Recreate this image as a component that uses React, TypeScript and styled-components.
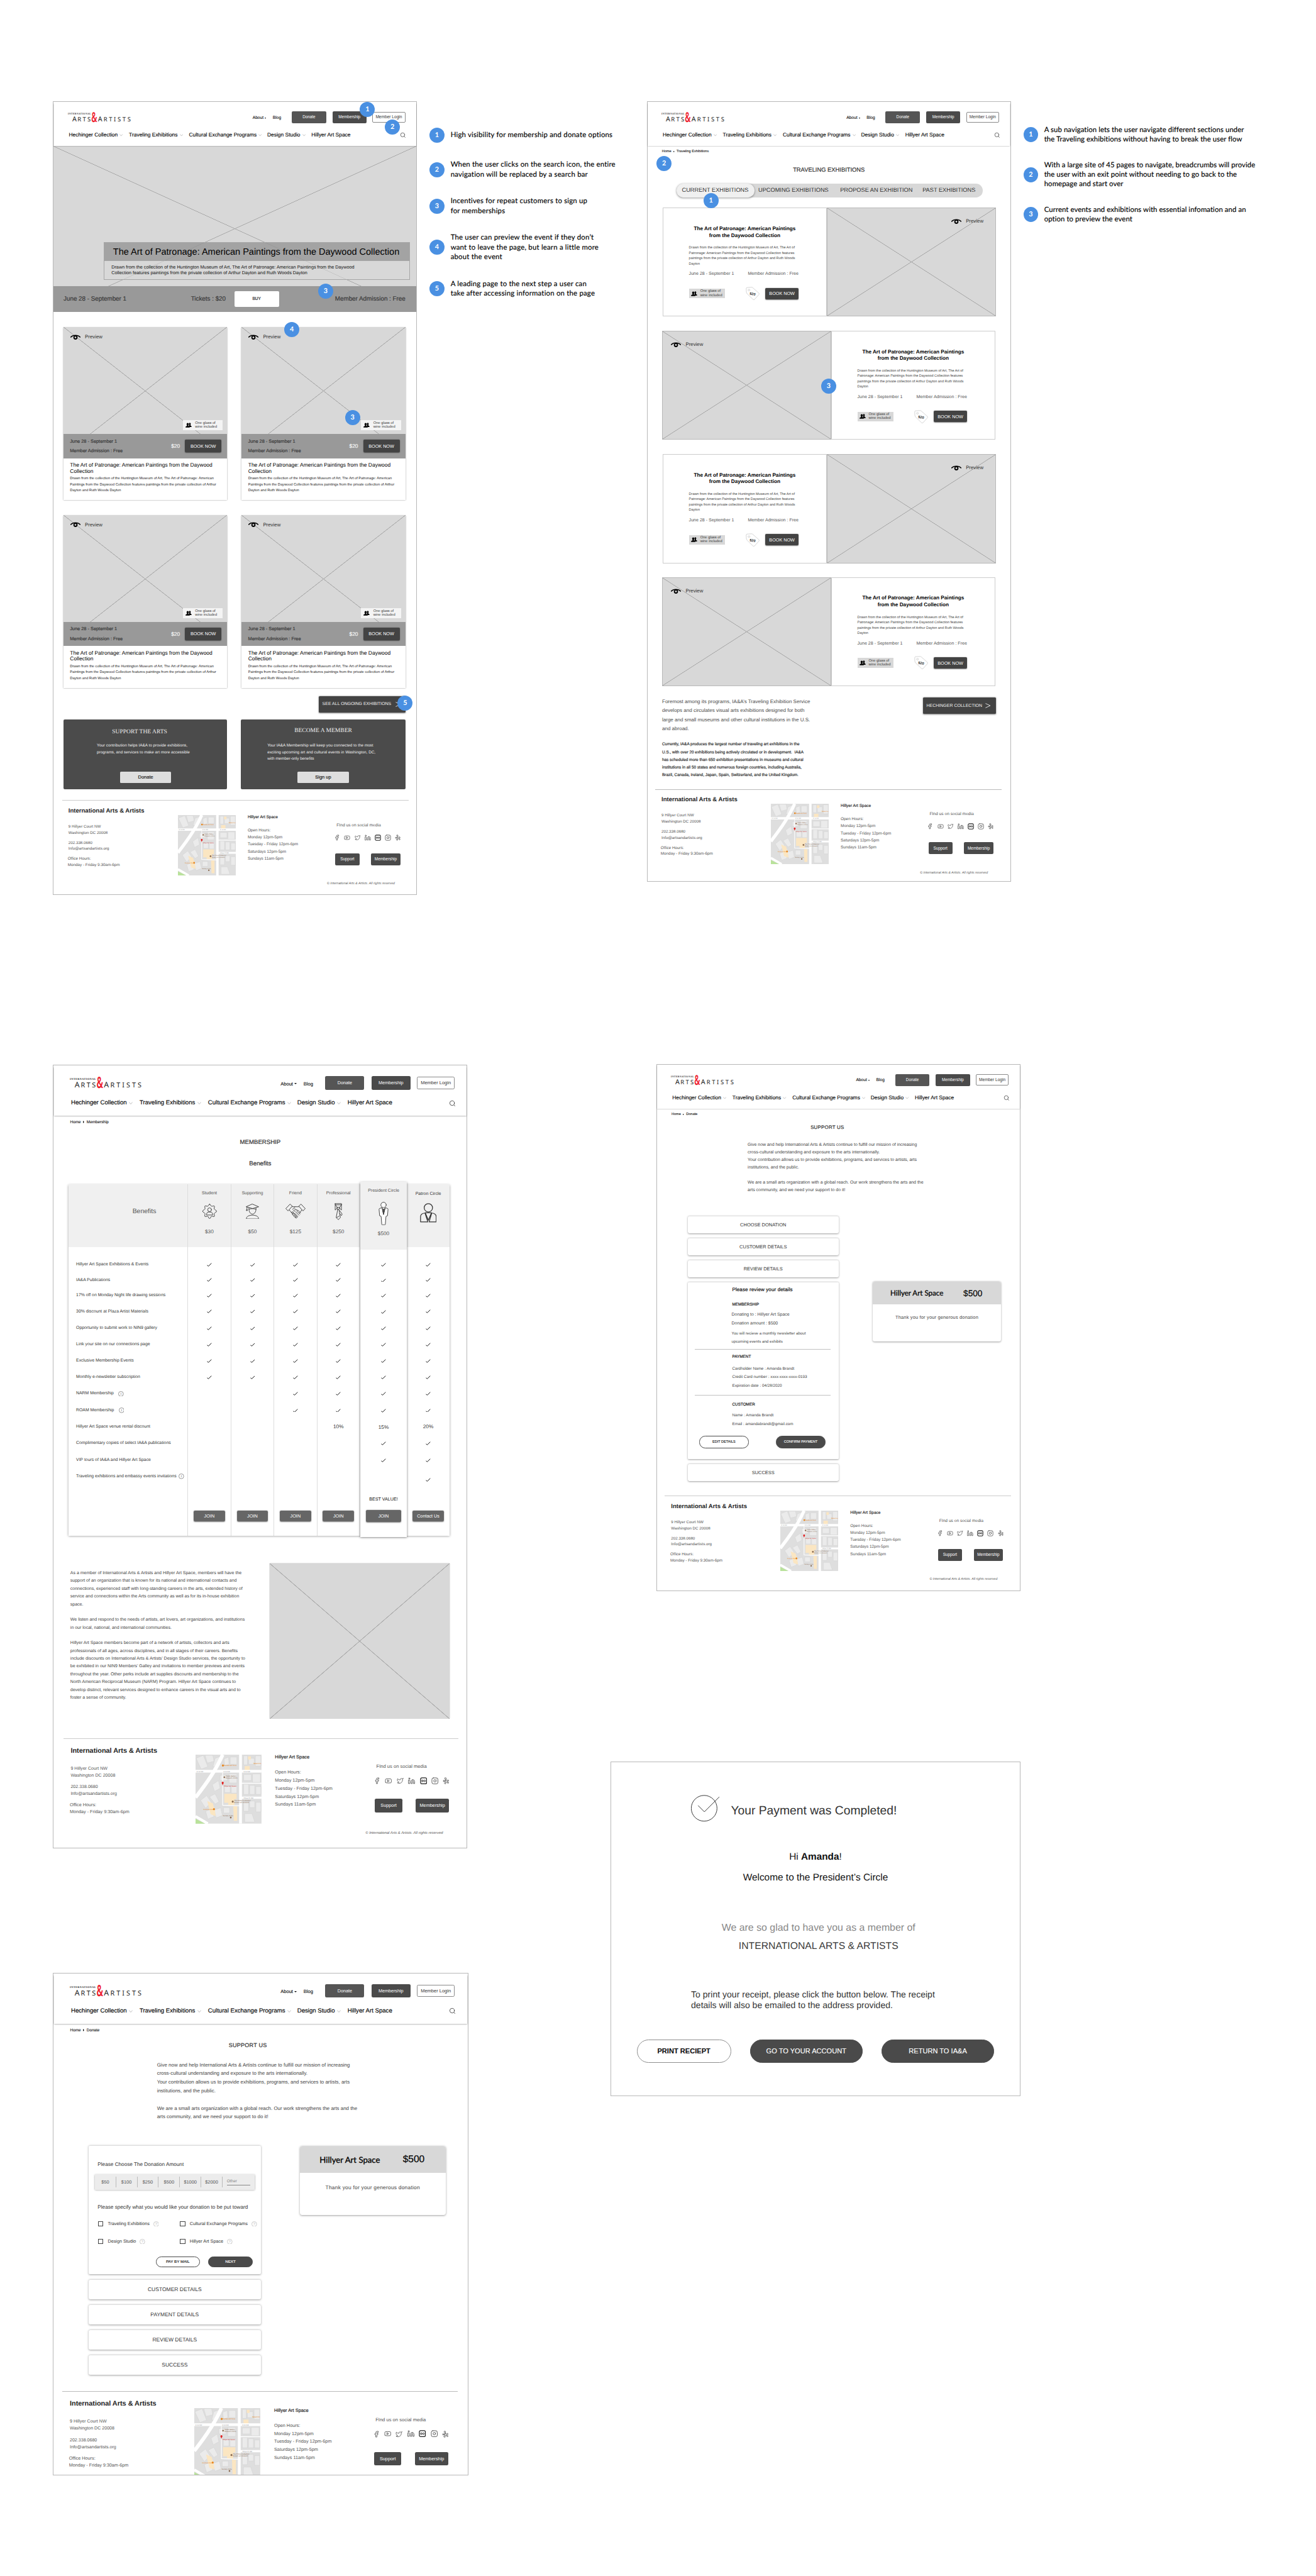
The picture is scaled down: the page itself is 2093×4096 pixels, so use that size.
import React from "react";
import styled, { createGlobalStyle, css } from "styled-components";
import { Facebook, Youtube, Twitter, Linkedin, Instagram, Search } from "lucide-react";

const GlobalStyle = createGlobalStyle`
  html, body { margin: 0; padding: 0; background: #fff; }
  * { box-sizing: border-box; }
  body {
    font-family: "Liberation Sans", Arial, sans-serif;
    text-rendering: geometricPrecision;
    color: #222;
  }
  svg { display: block; flex: none; }
`;

/* ---------- canvas ---------- */

const Canvas = styled.main`
  zoom: 0.80345;
  width: 2605px;
  height: 5098px;
  display: flex;
  overflow: hidden;
  background: #fff;
`;

const Lane = styled.div<{ $w: number; $pl: number }>`
  width: ${(p) => p.$w}px;
  padding: 201px 0 0 ${(p) => p.$pl}px;
  display: flex;
  flex-direction: column;
  align-items: flex-start;
  flex: none;
`;

const Annotated = styled.div<{ $ml?: number }>`
  margin-left: ${(p) => p.$ml ?? 0}px;
  display: flex;
  align-items: flex-start;
`;

const Board = styled.section<{ $w: number; $h: number; $mt?: number; $ml?: number; $scale?: number }>`
  position: relative;
  zoom: ${(p) => p.$scale ?? 1};
  width: ${(p) => p.$w}px;
  height: ${(p) => p.$h}px;
  margin-top: ${(p) => p.$mt ?? 0}px;
  margin-left: ${(p) => p.$ml ?? 0}px;
  outline: 1.6px solid #b8b8b8;
  outline-offset: -1.6px;
  overflow: hidden;
  flex: none;
  background: #fff;
`;

const BoardWrap = styled.div`
  position: relative;
  flex: none;
`;

/* ---------- text ---------- */

type CopyProps = {
  $size: number;
  $line: number;
  $color?: string;
  $medium?: boolean;
  $bold?: boolean;
  $ls?: number;
  $mt?: number;
  $ml?: number;
  $center?: boolean;
  $italic?: boolean;
};

const Copy = styled.div<CopyProps>`
  font-size: ${(p) => p.$size}px;
  line-height: ${(p) => p.$line}px;
  color: ${(p) => p.$color ?? "#333"};
  font-weight: ${(p) => (p.$bold ? 700 : 400)};
  font-style: ${(p) => (p.$italic ? "italic" : "normal")};
  letter-spacing: ${(p) => p.$ls ?? 0}px;
  margin-top: ${(p) => p.$mt ?? 0}px;
  margin-left: ${(p) => p.$ml ?? 0}px;
  text-align: ${(p) => (p.$center ? "center" : "left")};
  white-space: pre;
  ${(p) => p.$medium && css`-webkit-text-stroke: 0.25px currentColor;`}
`;

/* ---------- annotation notes ---------- */

const Dot = styled.span<{ $w?: number }>`
  width: ${(p) => p.$w ?? 30}px;
  height: 30px;
  border-radius: 50%;
  background: #4a90e2;
  color: #fff;
  font: 700 13.5px/31px Lato, sans-serif;
  text-align: center;
  flex: none;
`;

const Pin = styled(Dot)<{ $x: number; $y: number }>`
  position: absolute;
  left: ${(p) => p.$x - 15}px;
  top: ${(p) => p.$y - 15}px;
  z-index: 2;
`;

const Notes = styled.ol<{ $ml: number; $mt: number; $gap: number }>`
  list-style: none;
  margin: ${(p) => p.$mt}px 0 0 ${(p) => p.$ml}px;
  padding: 0;
  display: flex;
  flex-direction: column;
  gap: ${(p) => p.$gap}px;
`;

const Note = styled.li`
  display: flex;
  align-items: center;
  gap: 12px;
`;

const NoteText = styled.p<{ $ls: number }>`
  margin: 0;
  font: 400 14.2px/19px Lato, sans-serif;
  letter-spacing: ${(p) => p.$ls}px;
  color: #000;
  white-space: pre;
  -webkit-text-stroke: 0.2px #000;
`;

type NoteListProps = { items: string[]; ml: number; mt: number; gap: number; ls: number; dot?: number };

const NoteList = ({ items, ml, mt, gap, ls, dot }: NoteListProps) => (
  <Notes $ml={ml} $mt={mt} $gap={gap}>
    {items.map((t, i) => (
      <Note key={i}>
        <Dot $w={dot}>{i + 1}</Dot>
        <NoteText $ls={ls}>{t}</NoteText>
      </Note>
    ))}
  </Notes>
);

/* ---------- site header ---------- */

const HeaderBar = styled.header`
  margin: 1.6px 1.6px 0;
  height: 86.4px;
  padding-top: 17.8px;
  background: #fff;
  box-shadow: 0 2px 2.5px -0.5px rgba(0, 0, 0, 0.42);
  position: relative;
  z-index: 1;
`;

const TopRow = styled.div`
  height: 23.6px;
  padding-left: 27.4px;
  display: grid;
  grid-template-columns: 366px 40px 37.6px 80.4px 79px 66px;
  align-items: center;
`;

const TopLink = styled.a`
  display: flex;
  align-items: center;
  gap: 2.5px;
  padding-top: 3px;
  font-size: 8.3px;
  line-height: 10px;
  color: #111;
  -webkit-text-stroke: 0.15px #111;
`;

const Caret = styled.i<{ $dir?: "right" }>`
  border: 2.2px solid transparent;
  ${(p) =>
    p.$dir === "right"
      ? css`border-left: 3px solid #111; border-right: 0;`
      : css`border-top: 3px solid #111; border-bottom: 0;`}
`;

const SolidButton = styled.button<{ $w: number; $h?: number; $size?: number; $bg?: string; $shadow?: boolean }>`
  width: ${(p) => p.$w}px;
  height: ${(p) => p.$h ?? 23.6}px;
  padding: 0;
  border: 0;
  border-radius: 2.5px;
  background: ${(p) => p.$bg ?? "#4a4a4a"};
  color: #fff;
  font: 400 ${(p) => p.$size ?? 7.9}px/1 "Liberation Sans", Arial, sans-serif;
  white-space: nowrap;
  flex: none;
  ${(p) => p.$shadow && css`box-shadow: 0 1px 2px rgba(0, 0, 0, 0.5);`}
`;

const OutlineButton = styled(SolidButton)`
  background: #fff;
  color: #333;
  border: 1.3px solid #8a8a8a;
`;

const NavRow = styled.nav`
  margin-top: 15.4px;
  height: 16px;
  padding-left: 29.7px;
  display: grid;
  grid-template-columns: 119px 118.7px 155px 87.4px 175.6px 12px;
  align-items: center;
`;

const NavLink = styled.a`
  display: flex;
  align-items: center;
  gap: 4px;
  font-size: 10.5px;
  line-height: 16px;
  color: #000;
  white-space: nowrap;
  -webkit-text-stroke: 0.15px #000;
`;

const Chevron = () => (
  <svg width="6.5" height="4.5" viewBox="0 0 6.5 4.5" fill="none" stroke="#999" strokeWidth="0.7">
    <path d="M0.4 0.6 3.25 3.9 6.1 0.6" />
  </svg>
);

const LogoMark = styled.svg`
  overflow: visible;
`;

const Logo = () => (
  <LogoMark width="125" height="21" viewBox="0 0 125 21" fill="#1c1c1c" fontFamily="'Noto Sans', sans-serif">
    <text x="0" y="5" fontSize="4.6" fontFamily="'Liberation Serif', serif" fontWeight="700" textLength="45.5">
      INTERNATIONAL
    </text>
    <text x="8.6" y="19" fontSize="13.4">
      A
    </text>
    <text x="19" y="19" fontSize="11.8" textLength="26">
      RTS
    </text>
    <text
      x="46.3"
      y="19.4"
      fontSize="27"
      fontWeight="600"
      fill="#ee1c2e"
      textLength="11.5"
      lengthAdjust="spacingAndGlyphs"
    >
      &amp;
    </text>
    <text x="59.3" y="19" fontSize="13.4">
      A
    </text>
    <text x="70.5" y="19" fontSize="11.8" textLength="54">
      RTISTS
    </text>
  </LogoMark>
);

const Header = () => (
  <HeaderBar>
    <TopRow>
      <Logo />
      <TopLink>
        About <Caret />
      </TopLink>
      <TopLink>Blog</TopLink>
      <SolidButton $w={68} $bg="#555">
        Donate
      </SolidButton>
      <SolidButton $w={67.5}>Membership</SolidButton>
      <OutlineButton $w={65.5} $h={21.5} $size={8.2}>
        Member Login
      </OutlineButton>
    </TopRow>
    <NavRow>
      {["Hechinger Collection", "Traveling Exhibitions", "Cultural Exchange Programs", "Design Studio"].map((t) => (
        <NavLink key={t}>
          {t} <Chevron />
        </NavLink>
      ))}
      <NavLink>Hillyer Art Space</NavLink>
      <Search size={12} color="#222" strokeWidth={1.6} />
    </NavRow>
  </HeaderBar>
);

const Crumbs = styled.div`
  margin: 6.5px 0 0 29.7px;
  height: 10px;
  display: flex;
  align-items: center;
  gap: 4px;
  font-size: 6.95px;
  line-height: 10px;
  color: #111;
  -webkit-text-stroke: 0.12px #111;
`;

const Breadcrumb = ({ here }: { here: string }) => (
  <Crumbs>
    Home <Caret $dir="right" /> {here}
  </Crumbs>
);

/* ---------- placeholders & small icons ---------- */

const crossed = css`
  background-color: #d8d8d8;
  background-image: linear-gradient(
      to top right,
      transparent calc(50% - 0.8px),
      #a8a8a8 calc(50% - 0.3px),
      #a8a8a8 calc(50% + 0.3px),
      transparent calc(50% + 0.8px)
    ),
    linear-gradient(
      to bottom right,
      transparent calc(50% - 0.8px),
      #a8a8a8 calc(50% - 0.3px),
      #a8a8a8 calc(50% + 0.3px),
      transparent calc(50% + 0.8px)
    );
  background-repeat: no-repeat;
`;

const EyeIcon = () => (
  <svg width="20" height="10" viewBox="0 0 20 10" fill="none" stroke="#000">
    <path d="M0.3 5.6C4.5 0.2 15.5 0.2 19.7 5.6" strokeWidth="1.9" />
    <circle cx="10" cy="5.7" r="3" strokeWidth="2.3" />
  </svg>
);

const PeopleIcon = () => (
  <svg width="12" height="10" viewBox="0 0 12 10" fill="#000">
    <ellipse cx="8.6" cy="2.6" rx="1.8" ry="2.3" />
    <path d="M7.4 4.2h2.4l.2 1.8 1.9.9V8.6H6.6z" />
    <ellipse cx="4.3" cy="3.2" rx="2.1" ry="2.5" />
    <path d="M.2 9.7V8.2c0-1 2-1.2 2.800-1.800V4.800h2.600v1.600C6.400 7 8.400 7.200 8.400 8.200v1.500z" />
  </svg>
);

const InfoIcon = ({ glyph, color }: { glyph: string; color: string }) => (
  <svg width="9.5" height="9.5" viewBox="0 0 19 19" fill="none" stroke={color} strokeWidth="1.3">
    <circle cx="9.5" cy="9.5" r="8.5" />
    <text x="9.5" y="13.7" fontSize="12" textAnchor="middle" fill={color} stroke="none">
      {glyph}
    </text>
  </svg>
);

const PreviewTag = styled.div<{ $top: number; $left: number }>`
  padding: ${(p) => p.$top}px 0 0 ${(p) => p.$left}px;
  display: flex;
  align-items: center;
  gap: 9px;
  font-size: 9.8px;
  line-height: 12px;
  color: #333;
`;

const Preview = ({ top, left }: { top: number; left: number }) => (
  <PreviewTag $top={top} $left={left}>
    <EyeIcon />
    Preview
  </PreviewTag>
);

const WineBadge = styled.div<{ $w: number; $h: number; $bg: string; $pl: number; $gap: number }>`
  width: ${(p) => p.$w}px;
  height: ${(p) => p.$h}px;
  padding-left: ${(p) => p.$pl}px;
  display: flex;
  align-items: center;
  gap: ${(p) => p.$gap}px;
  background: ${(p) => p.$bg};
  font-size: 7.2px;
  line-height: 7.7px;
  color: #333;
  white-space: pre;
  flex: none;
`;

/* ---------- footer ---------- */

const FooterBar = styled.footer<{ $ml: number; $rule: string }>`
  width: 685.7px;
  margin-left: ${(p) => p.$ml}px;
  height: 187px;
  padding-left: 12.6px;
  border-top: 1.3px solid ${(p) => p.$rule};
  display: grid;
  grid-template-columns: 216.7px 138.1px 155.7px 170px;
  align-items: start;
`;

const SocialRow = styled.div`
  margin: 10.6px 0 0 15.3px;
  height: 14px;
  display: grid;
  grid-template-columns: repeat(7, 20.1px);
  align-items: center;
`;

const FooterActions = styled.div`
  margin: 24.3px 0 0 17.9px;
  display: flex;
  gap: 23.2px;
`;

const MapFrame = styled.div`
  margin-top: 28px;
`;

const MapPicture = () => (
  <MapFrame>
    <svg width="114.5" height="119.7" viewBox="0 0 236 229" preserveAspectRatio="none" fontFamily="'Liberation Sans', sans-serif">
      <rect width="236" height="229" fill="#dedede" />
      <g fill="#ebebeb" stroke="#cfcfcf" strokeWidth="1">
        <path d="M2 12 28 2 44 40 20 48zM34 2h28l4 20-24 6zM70 12 88 6 78 38 62 40z" />
        <path d="M102 14 118 8 120 32 104 36zM124 8h24v24h-24z" />
        <path d="M172 4h14v30h-14zM190 12h20v20h-20zM214 4h20v34h-20z" />
        <path d="M88 68h26v18H88zM120 64h28v30h-28zM60 100l22-14 6 26-20 10zM104 104h20v22h-20zM128 102h20v26h-20z" />
        <path d="M172 66h28v20h-28zM204 64h28v28h-28zM172 98h18v34h-18zM194 102h18v30h-18zM216 106h18v26h-18z" />
        <path d="M18 152l22-16 16 22-20 20zM50 140l20-10 14 26-14 8zM66 184l24-8 6 26-22 8zM36 188l22-8 8 26-22 8z" />
        <path d="M172 156h18v32h-18zM194 154h18v22h-18zM216 158h18v32h-18zM176 196h26l10 28h-36zM100 176h22v18h-22z" />
      </g>
      <path
        d="M103 130h44v18h-8v20h-22v-8h-14zM135 172h14v48h-12zM42 154l20 8 8 26 2 16-18-6zM176 38h18v14h-18zM188 6h10v10h-10z"
        fill="#fbe6c2"
      />
      <g stroke="#fff" fill="none">
        <path d="M97 0Q70 60 0 142" strokeWidth="13" />
        <path d="M161 0V229" strokeWidth="10" />
        <path d="M0 55H236" strokeWidth="9" />
        <path d="M161 95H236" strokeWidth="3" />
        <path d="M161 143H236" strokeWidth="7" />
        <path d="M97 60V168L160 170" strokeWidth="2.5" />
        <path d="M0 205 44 229" strokeWidth="9" />
      </g>
      <path d="M0 213 34 229H0z" fill="#b9e29b" />
      <g fontSize="6">
        <g fill="#e8871e">
          <circle cx="98" cy="36" r="3.5" />
          <text x="102" y="38.5">Restaurant Nora</text>
          <circle cx="66" cy="181" r="3.5" />
          <text x="28" y="183">Cosmos Club</text>
          <text x="207" y="31">Tabard Inn</text>
        </g>
        <g fill="#8d6e54">
          <circle cx="103" cy="75" r="3" />
          <text x="108" y="73">Studio Gallery</text>
          <text x="108" y="80">Museum of Arts</text>
          <circle cx="133" cy="156" r="3.5" />
          <text x="138" y="154">The Phillips Collection</text>
          <text x="138" y="161">Modern art museum</text>
          <circle cx="126" cy="209" r="3" />
          <text x="98" y="205">Society of the</text>
        </g>
        <g fill="#999">
          <text x="4" y="57.5">R St NW</text>
          <text x="100" y="57.5">R St NW</text>
          <text x="172" y="57.5">R St NW</text>
          <text x="172" y="145.5">Hillyer Pl NW</text>
        </g>
        <text x="102" y="106" fill="#c33">
          Hillyer Art Space
        </text>
      </g>
      <path d="M97 104C97 98 93.500 97 93.500 93.500a3.700 3.700 0 0 1 7.400 0C101 97 97 98 97 104z" fill="#e02020" />
    </svg>
  </MapFrame>
);

const FlickrIcon = () => (
  <svg width="12.5" height="12.5" viewBox="0 0 24 24" fill="none" stroke="#222" strokeWidth="2.6">
    <rect x="2" y="2" width="20" height="20" rx="4" />
    <circle cx="8.3" cy="12" r="2.7" strokeWidth="2" />
    <circle cx="15.7" cy="12" r="2.7" strokeWidth="2" />
  </svg>
);

const YelpIcon = () => (
  <svg width="12" height="12" viewBox="0 0 24 24" fill="none" stroke="#333" strokeWidth="1.6">
    <path d="M7 2.500c2-1.200 4.600-1.200 5.200 0V11L10.500 11.500z" />
    <path d="M3 10.500c-.8 2-.8 3.500 0 4.500l6.500-1.500v-1.200z" />
    <path d="M5.500 20.500C7 22 9 22.800 10.500 22.500l1-6.500-1-.6z" />
    <path d="M18.500 21.500c1.400-1 2.300-2.300 2.500-3.800l-5.800-2.200-.8.900z" />
    <path d="M21 12.500c-.3-1.700-1.300-3.200-2.700-4.200l-3.800 4.200.7.900z" />
  </svg>
);

const Footer = ({ ml, rule }: { ml: number; rule: string }) => (
  <FooterBar $ml={ml} $rule={rule}>
    <div>
      <Copy $size={11.9} $line={16} $bold $mt={13.2} $color="#222">
        International Arts &amp; Artists
      </Copy>
      <Copy $size={7.75} $line={12} $mt={16.8} $color="#555">
        {"9 Hillyer Court NW\nWashington DC 20008"}
      </Copy>
      <Copy $size={7.75} $line={12} $mt={8} $color="#555">
        {"202.338.0680\nInfo@artsandartists.org"}
      </Copy>
      <Copy $size={7.9} $line={12} $mt={7.7} $ml={-1.5} $color="#555">
        {"Office Hours:\nMonday - Friday 9:30am-6pm"}
      </Copy>
    </div>
    <MapPicture />
    <div>
      <Copy $size={8.1} $line={12} $medium $mt={26.7}>
        Hillyer Art Space
      </Copy>
      <Copy $size={8} $line={14} $mt={13.1} $color="#555">
        {"Open Hours:\nMonday 12pm-5pm\nTuesday - Friday 12pm-6pm\nSaturdays 12pm-5pm\nSundays 11am-5pm"}
      </Copy>
    </div>
    <div>
      <Copy $size={8.3} $line={12} $mt={43.4} $ml={20.3} $color="#555">
        FInd us on social media
      </Copy>
      <SocialRow>
        <Facebook size={12} color="#333" strokeWidth={1.5} />
        <Youtube size={12.5} color="#333" strokeWidth={1.5} />
        <Twitter size={12} color="#333" strokeWidth={1.5} />
        <Linkedin size={12.5} color="#333" strokeWidth={1.5} />
        <FlickrIcon />
        <Instagram size={12.5} color="#333" strokeWidth={1.6} />
        <YelpIcon />
      </SocialRow>
      <FooterActions>
        <SolidButton $w={47.5} $size={8}>
          Support
        </SolidButton>
        <SolidButton $w={58} $size={8}>
          Membership
        </SolidButton>
      </FooterActions>
      <Copy $size={6.4} $line={10} $mt={31.7} $ml={1.4} $italic $color="#555">
        © International Arts &amp; Artists. All rights reserved
      </Copy>
    </div>
  </FooterBar>
);

/* ---------- home board ---------- */

const Hero = styled.div`
  ${crossed}
  height: 327.8px;
  background-size: 100% 327.8px;
  display: flex;
  flex-direction: column;
`;

const HeroCaption = styled.div`
  margin: 189.7px 0 0 100.8px;
  width: 605.5px;
  height: 75.5px;
  border: 1px solid #a6a6a6;
  background: rgba(216, 216, 216, 0.6);
`;

const HeroTitle = styled.h1`
  margin: 0;
  height: 36.5px;
  padding: 2px 0 0 16.8px;
  background: rgba(110, 110, 110, 0.5);
  border-bottom: 1px solid #a6a6a6;
  font-size: 18.05px;
  font-weight: 400;
  line-height: 35px;
  color: #000;
  white-space: nowrap;
`;

const HeroStrip = styled.div`
  margin-top: auto;
  height: 50px;
  padding: 0 22.5px 0 20.8px;
  display: grid;
  grid-template-columns: 252.2px 85.7px 88.7px 1fr;
  align-items: center;
  background: #999;
  font-size: 12.25px;
  color: #3a3a3a;
  -webkit-text-stroke: 0.25px #3a3a3a;
`;

const BuyButton = styled.button`
  height: 31px;
  border: 0;
  border-radius: 2.5px;
  background: #fff;
  color: #111;
  font: 400 8px/1 "Liberation Sans", Arial, sans-serif;
`;

const RightText = styled.span`
  text-align: right;
`;

const CardGrid = styled.div`
  margin: 30.5px 0 0 20.8px;
  width: 676.7px;
  display: grid;
  grid-template-columns: 324px 324px;
  column-gap: 28.7px;
  row-gap: 29px;
`;

const EventCard = styled.article`
  height: 342.8px;
  background: #fff;
  box-shadow: 0 1px 2.5px rgba(0, 0, 0, 0.45);
`;

const EventPicture = styled.div`
  ${crossed}
  height: 211.3px;
  background-size: 100% 253px;
  display: flex;
  flex-direction: column;
  justify-content: space-between;
  align-items: flex-start;
`;

const EventBadgeSlot = styled.div`
  margin: 0 0 7px 236.5px;
`;

const EventStrip = styled.div`
  height: 48.3px;
  padding: 0 11.4px 0 12.6px;
  display: grid;
  grid-template-columns: 200.4px 27.4px 72.2px;
  align-items: center;
  background: #999;
`;

const EventText = styled.div`
  padding: 8.5px 0 0 12.8px;
`;

const EventTile = () => (
  <EventCard>
    <EventPicture>
      <Preview top={13.5} left={13.3} />
      <EventBadgeSlot>
        <WineBadge $w={78.5} $h={20} $bg="#f4f4f4" $pl={5} $gap={7}>
          <PeopleIcon />
          {"One glass of\nwine included"}
        </WineBadge>
      </EventBadgeSlot>
    </EventPicture>
    <EventStrip>
      <Copy $size={9.2} $line={19.3} $medium $color="#3a3a3a">
        {"June 28 - September 1\nMember Admission : Free"}
      </Copy>
      <Copy $size={10.4} $line={20} $medium $color="#f4f4f4">
        $20
      </Copy>
      <SolidButton $w={72.2} $h={24.4} $size={9} $bg="#434343" $shadow>
        BOOK NOW
      </SolidButton>
    </EventStrip>
    <EventText>
      <Copy $size={10.55} $line={11.3} $color="#000">
        {"The Art of Patronage: American Paintings from the Daywood\nCollection"}
      </Copy>
      <Copy $size={7.06} $line={11.5} $mt={4.8} $color="#222">
        {
          "Drawn from the collection of the Huntington Museum of Art, The Art of Patronage: American\nPaintings from the Daywood Collection features paintings from the private collection of Arthur\nDayton and Ruth Woods Dayton"
        }
      </Copy>
    </EventText>
  </EventCard>
);

const ArrowButton = styled.a<{ $w: number; $size: number; $mt: number; $gap: number }>`
  width: ${(p) => p.$w}px;
  height: 32px;
  margin-top: ${(p) => p.$mt}px;
  padding-left: 7px;
  display: flex;
  align-items: center;
  gap: ${(p) => p.$gap}px;
  border-radius: 2px;
  background: #434343;
  box-shadow: 0 1px 3px rgba(0, 0, 0, 0.55);
  color: #f2f2f2;
  font-size: ${(p) => p.$size}px;
  white-space: nowrap;
  flex: none;
`;

const ArrowGlyph = () => (
  <svg width="10.5" height="10" viewBox="0 0 10.5 10" fill="none" stroke="#fff" strokeWidth="1">
    <path d="M0.5 0.7 9.8 5 0.5 9.3" />
  </svg>
);

const SeeAllRow = styled.div`
  display: flex;
  justify-content: flex-end;
  padding-right: 22.5px;
`;

const PromoRow = styled.div`
  margin: 14.6px 0 21px 20.8px;
  display: flex;
  gap: 27.4px;
`;

const Promo = styled.div<{ $w: number }>`
  width: ${(p) => p.$w}px;
  height: 138px;
  border-radius: 2.5px;
  background: #4b4b4b;
  display: flex;
  flex-direction: column;
`;

const PromoTitle = styled.h2<{ $mt: number; $ml: number }>`
  margin: ${(p) => p.$mt}px 0 0 ${(p) => p.$ml}px;
  font: 400 11.9px/16px "Liberation Serif", serif;
  color: #eee;
  white-space: nowrap;
`;

const PromoButton = styled.button<{ $ml: number }>`
  margin: auto 0 12.4px ${(p) => p.$ml}px;
  width: 101px;
  height: 22.8px;
  flex: none;
  border: 0;
  border-radius: 2px;
  background: #dedede;
  color: #111;
  font: 400 9.3px/1 "Liberation Sans", Arial, sans-serif;
  -webkit-text-stroke: 0.2px #111;
`;

const HomeBoard = () => (
  <BoardWrap>
    <Board $w={720} $h={1570}>
      <Header />
      <Hero>
        <HeroCaption>
          <HeroTitle>The Art of Patronage: American Paintings from the Daywood Collection</HeroTitle>
          <Copy $size={9.05} $line={11.8} $mt={6} $ml={13.5} $color="#111">
            {
              "Drawn from the collection of the Huntington Museum of Art, The Art of Patronage: American Paintings from the Daywood\nCollection features paintings from the private collection of Arthur Dayton and Ruth Woods Dayton"
            }
          </Copy>
        </HeroCaption>
        <HeroStrip>
          <span>June 28 - September 1</span>
          <span>Tickets : $20</span>
          <BuyButton>BUY</BuyButton>
          <RightText>Member Admission : Free</RightText>
        </HeroStrip>
      </Hero>
      <CardGrid>
        <EventTile />
        <EventTile />
        <EventTile />
        <EventTile />
      </CardGrid>
      <SeeAllRow>
        <ArrowButton $w={171.5} $size={8.7} $mt={16} $gap={8.5}>
          SEE ALL ONGOING EXHIBITIONS <ArrowGlyph />
        </ArrowButton>
      </SeeAllRow>
      <PromoRow>
        <Promo $w={324}>
          <PromoTitle $mt={17} $ml={96}>
            SUPPORT THE ARTS
          </PromoTitle>
          <Copy $size={7.95} $line={12.6} $mt={13} $ml={66} $color="#eee">
            {"Your contribution helps IA&A to provide exhibitions,\nprograms, and services to make art more accessible"}
          </Copy>
          <PromoButton $ml={112}>Donate</PromoButton>
        </Promo>
        <Promo $w={325.3}>
          <PromoTitle $mt={15} $ml={105.5}>
            BECOME A MEMBER
          </PromoTitle>
          <Copy $size={7.95} $line={12.7} $mt={15} $ml={52} $color="#eee">
            {
              "Your IA&A Membership will keep you connected to the most\nexciting upcoming art and cultural events in Washington, DC,\nwith member-only benefits"
            }
          </Copy>
          <PromoButton $ml={112}>Sign up</PromoButton>
        </Promo>
      </PromoRow>
      <Footer ml={17.9} rule="#ccc" />
    </Board>
    <Pin $x={622.4} $y={15.2}>1</Pin>
    <Pin $x={671.8} $y={50.7}>2</Pin>
    <Pin $x={539.5} $y={375}>3</Pin>
    <Pin $x={472.6} $y={451.4}>4</Pin>
    <Pin $x={592.8} $y={626}>3</Pin>
    <Pin $x={697} $y={1190.7}>5</Pin>
  </BoardWrap>
);

/* ---------- traveling exhibitions board ---------- */

const Tabs = styled.div`
  margin: 18.7px 0 0 58.4px;
  width: 606.4px;
  height: 26.6px;
  padding-right: 16px;
  display: grid;
  grid-template-columns: 155px 162px 163px 1fr;
  align-items: center;
  border-radius: 13.3px;
  background: #d8d8d8;
`;

const Tab = styled.a<{ $active?: boolean }>`
  height: 26.6px;
  padding-left: ${(p) => (p.$active ? 11 : 7.2)}px;
  border-radius: 13.3px;
  font-size: 11.5px;
  line-height: 26.6px;
  color: #333;
  white-space: nowrap;
  ${(p) => p.$active && css`background: #f0f0f0; box-shadow: 0 1px 4px rgba(0, 0, 0, 0.45);`}
`;

const ShowRow = styled.article<{ $mt: number; $h: number; $flip?: boolean }>`
  margin: ${(p) => p.$mt}px 0 0 ${(p) => (p.$flip ? 30 : 31)}px;
  width: 659.7px;
  height: ${(p) => p.$h}px;
  display: flex;
  flex-direction: ${(p) => (p.$flip ? "row-reverse" : "row")};
  flex: none;
`;

const ShowPicture = styled.div`
  ${crossed}
  width: 334.5px;
  border: 1px solid #b8b8b8;
`;

const ShowText = styled.div`
  flex: 1;
  padding: 34px 0 0;
  border: 1.3px solid #ccc;
`;

const ShowBody = styled.div`
  margin-left: 50.9px;
  width: 217px;
`;

const Facts = styled.div`
  margin-top: 8.5px;
  display: flex;
  justify-content: space-between;
`;

const Actions = styled.div`
  margin-top: 19px;
  display: flex;
  align-items: center;
`;

const TagSlot = styled.div`
  margin: 0 12px 0 41px;
`;

const PriceTag = () => (
  <svg width="27.5" height="27" viewBox="0 0 55 54" fill="#fff" stroke="#bbb" strokeWidth="1.5">
    <path d="M2 7Q2 3 6 3L22 2Q25 2 27 3L52 25Q55 28 52 31L35 50Q32 53 29 50L6 28Q3 25 2.5 20z" />
    <ellipse cx="13" cy="13" rx="3.8" ry="3.2" />
    <text x="15" y="31" fontSize="14" fontWeight="700" fill="#222" stroke="none" transform="rotate(10 15 31)">
      $20
    </text>
  </svg>
);

const ShowItem = ({ mt, h, flip }: { mt: number; h: number; flip?: boolean }) => (
  <ShowRow $mt={mt} $h={h} $flip={flip}>
    <ShowText>
      <Copy $size={10.2} $line={13.6} $bold $center $color="#000">
        {"The Art of Patronage: American Paintings\nfrom the Daywood Collection"}
      </Copy>
      <ShowBody>
        <Copy $size={6.83} $line={10.55} $mt={12} $color="#444">
          {
            "Drawn from the collection of the Huntington Museum of Art, The Art of\nPatronage: American Paintings from the Daywood Collection features\npaintings from the private collection of Arthur Dayton and Ruth Woods\nDayton"
          }
        </Copy>
        <Facts>
          <Copy $size={8.8} $line={12} $color="#555">
            June 28 - September 1
          </Copy>
          <Copy $size={8.8} $line={12} $color="#555">
            Member Admission : Free
          </Copy>
        </Facts>
        <Actions>
          <WineBadge $w={71} $h={19.5} $bg="#d8d8d8" $pl={4.5} $gap={6}>
            <PeopleIcon />
            {"One glass of\nwine included"}
          </WineBadge>
          <TagSlot>
            <PriceTag />
          </TagSlot>
          <SolidButton $w={65.5} $h={22.5} $size={9} $bg="#434343" $shadow>
            BOOK NOW
          </SolidButton>
        </Actions>
      </ShowBody>
    </ShowText>
    <ShowPicture>
      <Preview top={20} left={flip ? 16.5 : 245} />
    </ShowPicture>
  </ShowRow>
);

const AboutProgram = styled.div<{ $h: number }>`
  margin-left: 30.1px;
  width: 661px;
  height: ${(p) => p.$h}px;
  display: flex;
  justify-content: space-between;
  align-items: flex-start;
`;

const ExhibitionsBoard = () => (
  <BoardWrap>
    <Board $w={720.5} $h={1544.5}>
      <Header />
      <Breadcrumb here="Traveling Exhibitions" />
      <Copy $size={11.65} $line={16} $medium $center $mt={23.5}>
        TRAVELING EXHIBITIONS
      </Copy>
      <Tabs>
        <Tab $active>CURRENT EXHIBITIONS</Tab>
        <Tab>UPCOMING EXHIBITIONS</Tab>
        <Tab>PROPOSE AN EXHIBITION</Tab>
        <Tab>PAST EXHIBITIONS</Tab>
      </Tabs>
      <ShowItem mt={20.9} h={215.5} />
      <ShowItem mt={28.3} h={215} flip />
      <ShowItem mt={29} h={215.7} />
      <ShowItem mt={28.1} h={215.2} flip />
      <AboutProgram $h={203.6}>
        <div>
          <Copy $size={10} $line={17.85} $mt={22.5} $color="#4a4a4a">
            {
              "Foremost among its programs, IA&A’s Traveling Exhibition Service\ndevelops and circulates visual arts exhibitions designed for both\nlarge and small museums and other cultural institutions in the U.S.\nand abroad."
            }
          </Copy>
          <Copy $size={8} $line={15.05} $mt={15} $medium>
            {
              "Currently, IA&A produces the largest number of traveling art exhibitions in the\nU.S., with over 20 exhibitions being actively circulated or in development.  IA&A\nhas scheduled more than 650 exhibition presentations in museums and cultural\ninstitutions in all 50 states and numerous foreign countries, including Australia,\nBrazil, Canada, Ireland, Japan, Spain, Switzerland, and the United Kingdom."
            }
          </Copy>
        </div>
        <ArrowButton $w={144.5} $size={8.7} $mt={23} $gap={6.5}>
          HECHINGER COLLECTION <ArrowGlyph />
        </ArrowButton>
      </AboutProgram>
      <Footer ml={16.3} rule="#bbb" />
    </Board>
    <Pin $x={34} $y={122.4}>2</Pin>
    <Pin $x={126.7} $y={195.6}>1</Pin>
    <Pin $x={359.7} $y={563.3}>3</Pin>
  </BoardWrap>
);

/* ---------- membership board ---------- */

const Plans = styled.div`
  position: relative;
  margin: 27px 0 0 26.6px;
  width: 662px;
  height: 610px;
  display: flex;
  box-shadow: 0 1px 4px rgba(0, 0, 0, 0.4);
`;

const PlanColumn = styled.div<{ $w: number; $featured?: boolean }>`
  width: ${(p) => p.$w}px;
  flex: none;
  display: flex;
  flex-direction: column;
  align-items: center;
  background: #fff;
  border-right: 1px solid #ddd;
  &:last-child {
    border-right: 0;
  }
  ${(p) =>
    p.$featured &&
    css`
      position: relative;
      margin: -4.4px 0 -2.2px;
      padding-bottom: 2.2px;
      border: 0;
      box-shadow: 0 1px 4px rgba(0, 0, 0, 0.5);
    `}
`;

const PlanHead = styled.div<{ $featured?: boolean }>`
  width: 100%;
  height: ${(p) => (p.$featured ? 117.3 : 109)}px;
  padding-top: 9px;
  background: #f0f0f0;
  display: flex;
  flex-direction: column;
  align-items: center;
  flex: none;
`;

const PlanIcon = styled.div<{ $h: number }>`
  height: ${(p) => p.$h}px;
  display: flex;
  align-items: center;
`;

const Cells = styled.div<{ $mt: number }>`
  margin-top: ${(p) => p.$mt}px;
  width: 100%;
`;

const Cell = styled.div<{ $h: number; $left?: boolean; $gap?: number }>`
  height: ${(p) => p.$h}px;
  display: flex;
  align-items: center;
  justify-content: ${(p) => (p.$left ? "flex-start" : "center")};
  padding-left: ${(p) => (p.$left ? 13.5 : 0)}px;
  gap: ${(p) => p.$gap ?? 8}px;
  font-size: ${(p) => (p.$left ? 7.5 : 9)}px;
  color: #333;
  white-space: nowrap;
`;

const JoinSlot = styled.div<{ $mb: number }>`
  margin-top: auto;
  margin-bottom: ${(p) => p.$mb}px;
  display: flex;
  flex-direction: column;
  align-items: center;
  gap: 11.5px;
`;

const Tick = () => (
  <svg width="8.5" height="6.5" viewBox="0 0 17 13" fill="none" stroke="#111">
    <path d="M1 8.5 5.5 11.5 16 1.5" strokeWidth="2.1" />
  </svg>
);

const rowHeights = [26.9, 26.8, 27.2, 28.2, 29, 28.8, 28, 28.3, 29, 28.8, 28.7, 28.8, 28.8, 29];
const benefits = [
  "Hillyer Art Space Exhibitions & Events",
  "IA&A Publications",
  "17% off on Monday Night life drawing sessions",
  "30% discount at Plaza Artist Materials",
  "Opportunity to submit work to NIN9 gallery",
  "Link your site on our connections page",
  "Exclusive Membership Events",
  "Monthly e-newsletter subscription",
  "NARM Membership",
  "ROAM Membership",
  "Hillyer Art Space venue rental discount",
  "Complimentary copies of select IA&A publications",
  "VIP tours of IA&A and Hillyer Art Space",
  "Traveling exhibitions and embassy events invitations",
];

const line = { fill: "none", stroke: "#333", strokeWidth: 1.1, strokeLinejoin: "round" as const, strokeLinecap: "round" as const };

const StudentIcon = () => (
  <svg width="27" height="27" viewBox="0 0 31 31" {...line}>
    <path d="M15.500.8c1.600 0 2 3.400 3.700 4.100 1.700.7 4.500-1.300 5.700-.2s-.9 4-.2 5.700c.7 1.700 4.700 2.500 4.700 4.600 0 2-4 2.900-4.700 4.600-.7 1.700 1.300 4.500.2 5.700s-4-.9-5.700-.2c-1.700.7-2.100 4.800-3.700 4.800s-2-4.100-3.700-4.800c-1.700-.7-4.500 1.300-5.700.2s.9-4 .2-5.700C5.600 17.900 1.600 17 1.600 15c0-2.100 4-2.900 4.700-4.600.7-1.700-1.300-4.500-.2-5.700s4 .9 5.700.2C13.500 4.200 13.900.8 15.500.8z" />
    <circle cx="15.5" cy="12" r="3.8" />
    <path d="M9.500 22v-1.500c0-3 3-4 6-4s6 1 6 4V22z" />
  </svg>
);

const GraduateIcon = () => (
  <svg width="23" height="26.5" viewBox="0 0 26 30" {...line}>
    <path d="M13 .8 25.200 6 13 9.500 1 6z" />
    <path d="M2.200 6.500v5.500M1.500 12h1.400v1.500H1.500z" />
    <path d="M6 8c-.3 3.500.2 11.500 7 12.500C19.800 19.500 20.300 11.500 20 8M6.200 11c4-2 9.600-2 13.600 0" />
    <path d="M1 29.300c0-4.500 5-6.800 12-6.800s12 2.300 12 6.800z" />
  </svg>
);

const HandshakeIcon = () => (
  <svg width="35" height="26" viewBox="0 0 40 30" {...line}>
    <path d="M.8 9.500 9 .8l4.500 4L5.500 14zM39.200 9.500 31 .8l-4.500 4 8 9.200z" />
    <path d="M13.500 6h13M7.500 12.500 12 18M32.500 12.500 28 19M14 11.500l5-5M18 10.500 26 14l4 4" />
    <path d="M12.500 17c2-2 4 0 3 1.500-2 2-4.500.5-3-1.500zM14 20.500c2.500-3 5-1 3.500 1-2 2.500-4.500 1.500-3.500-1zM17 24c2.500-3 5-1 3.500 1-2 2.500-4.500 1.500-3.500-1zM20 27c2-2.500 4.500-1 3 .8-1.500 1.800-3.800 1-3-.8z" />
    <path d="M20 16l7 7M22.500 14.500l6.500 6M18 19l6.500 6.500M16.500 13c-1 2 1 2.500 2.500 1" />
  </svg>
);

const TieIcon = () => (
  <svg width="14.5" height="29.5" viewBox="0 0 16 34" {...line}>
    <path d="M1 1h12.500v13L9.500 9.500 14 2.500M1 1v13l4.500-4.500L1 2.500M1.500 3.500h12" />
    <path d="M5 8.500h4.500l-1 4.500H6zM6 13 3 29l4.200 4.200L11.500 29 8.500 13" />
    <path d="M10 15l5 7-1.500 3-3.500-4M9 26l-5 3" />
  </svg>
);

const PresidentIcon = () => (
  <svg width="17.5" height="41" viewBox="0 0 19 46" {...line} fill="#fff">
    <circle cx="9.5" cy="6" r="5.2" />
    <path d="M6 11.500 1.500 13Q.8 13.500.8 15l1 12 3 1.500L6 43.500Q6.200 45 7.500 45h4q1.300 0 1.500-1.500L14.200 28.500l3-1.500 1-12q0-1.500-.7-2L13 11.500 9.500 24z" />
    <path d="M7 12 9.500 25 12 12M9 14v6M10 14v6" />
  </svg>
);

const PatronIcon = () => (
  <svg width="29" height="33.5" viewBox="0 0 32 37" {...line} strokeWidth="1.5">
    <circle cx="16" cy="9" r="8" />
    <path d="M10 18.500h12L16 33zM9.500 19 15 36H1V26q0-6 8.500-7zM22.500 19 17.500 36H31V26q0-6-8.500-7z" />
  </svg>
);

type Plan = {
  name: string;
  price: string;
  w: number;
  icon: React.ReactNode;
  perks: number;
  pct?: string;
  featured?: boolean;
};

const plans: Plan[] = [
  { name: "Student", price: "$30", w: 75, icon: <StudentIcon />, perks: 8 },
  { name: "Supporting", price: "$50", w: 74.7, icon: <GraduateIcon />, perks: 8 },
  { name: "Friend", price: "$125", w: 74.7, icon: <HandshakeIcon />, perks: 10 },
  { name: "Professional", price: "$250", w: 74.7, icon: <TieIcon />, perks: 11, pct: "10%" },
  { name: "President Circle", price: "$500", w: 80.9, icon: <PresidentIcon />, perks: 13, pct: "15%", featured: true },
  { name: "Patron Circle", price: "", w: 74.2, icon: <PatronIcon />, perks: 14, pct: "20%" },
];

const PlanView = ({ plan, last }: { plan: Plan; last: boolean }) => (
  <PlanColumn $w={plan.w} $featured={plan.featured}>
    <PlanHead $featured={plan.featured}>
      <Copy $size={7.7} $line={14} $color={last ? "#333" : "#555"} $mt={plan.featured ? 0.5 : last ? 1 : 0}>
        {plan.name}
      </Copy>
      <PlanIcon $h={plan.featured ? 62 : last ? 51 : 47}>{plan.icon}</PlanIcon>
      <Copy $size={9} $line={14} $color="#555" $mt={plan.featured ? -2 : 5.5}>
        {plan.price}
      </Copy>
    </PlanHead>
    <Cells $mt={plan.featured ? 12.8 : 16.5}>
      {rowHeights.map((h, i) => (
        <Cell key={i} $h={i === 13 && last ? 40 : h}>
          {i === 10 && plan.pct ? plan.pct : i < plan.perks ? <Tick /> : null}
        </Cell>
      ))}
    </Cells>
    <JoinSlot $mb={plan.featured ? 24 : 25}>
      {plan.featured && (
        <Copy $size={7.8} $line={14} $color="#111">
          BEST VALUE!
        </Copy>
      )}
      <SolidButton $w={plan.featured ? 61 : 54.2} $h={plan.featured ? 20.5 : 18.6} $size={last ? 7.9 : 8} $bg="#666" $shadow>
        {last ? "Contact Us" : "JOIN"}
      </SolidButton>
    </JoinSlot>
  </PlanColumn>
);

const BenefitColumn = styled.div`
  width: 207.8px;
  flex: none;
  border-right: 1px solid #ddd;
`;

const BenefitHead = styled.div`
  height: 109px;
  padding: 40.5px 0 0 111.3px;
  background: #f0f0f0;
`;

const MemberCopy = styled.div`
  margin: 48.2px 0 33.4px 30px;
  width: 658px;
  display: flex;
  justify-content: space-between;
`;

const MemberPicture = styled.div`
  ${crossed}
  width: 311.4px;
  height: 269.5px;
  box-shadow: 0 0.5px 1.5px rgba(0, 0, 0, 0.5);
`;

const MembershipBoard = () => (
  <Board $w={719.5} $h={1359.7} $mt={295.3} $scale={1.14}>
    <Header />
    <Breadcrumb here="Membership" />
    <Copy $size={10.5} $line={16} $medium $center $mt={22.8}>
      MEMBERSHIP
    </Copy>
    <Copy $size={10.6} $line={16} $medium $center $mt={21.3}>
      Benefits
    </Copy>
    <Plans>
      <BenefitColumn>
        <BenefitHead>
          <Copy $size={11.4} $line={14} $color="#555">
            Benefits
          </Copy>
        </BenefitHead>
        <Cells $mt={16.3}>
          {benefits.map((b, i) => (
            <Cell key={b} $h={rowHeights[i]} $left $gap={i === 13 ? 4 : 8}>
              {b}
              {(i === 8 || i === 9 || i === 13) && <InfoIcon glyph="i" color="#555" />}
            </Cell>
          ))}
        </Cells>
      </BenefitColumn>
      {plans.map((p, i) => (
        <PlanView key={p.name} plan={p} last={i === plans.length - 1} />
      ))}
    </Plans>
    <MemberCopy>
      <Copy $size={7.65} $line={13.49} $mt={10.7} $color="#444">
        {
          "As a member of International Arts & Artists and Hillyer Art Space, members will have the\nsupport of an organization that is known for its national and international contacts and\nconnections, experienced staff with long-standing careers in the arts, extended history of\nservice and connections within the Arts community as well as for its in-house exhibition\nspace.\n\nWe listen and respond to the needs of artists, art lovers, art organizations, and institutions\nin our local, national, and international communities.\n\nHillyer Art Space members become part of a network of artists, collectors and arts\nprofessionals of all ages, across disciplines, and in all stages of their careers. Benefits\ninclude discounts on International Arts & Artists’ Design Studio services, the opportunity to\nbe exhibited in our NIN9 Members’ Galley and invitations to member previews and events\nthroughout the year. Other perks include art supplies discounts and membership to the\nNorth American Reciprocal Museum (NARM) Program. Hillyer Art Space continues to\ndevelop distinct, relevant services designed to enhance careers in the visual arts and to\nfoster a sense of community."
        }
      </Copy>
      <MemberPicture />
    </MemberCopy>
    <Footer ml={18} rule="#ccc" />
  </Board>
);

/* ---------- donation boards ---------- */

const supportCopy =
  "Give now and help International Arts & Artists continue to fulfill our mission of increasing\ncross-cultural understanding and exposure to the arts internationally.\nYour contribution allows us to provide exhibitions, programs, and services to artists, arts\ninstitutions, and the public.\n\nWe are a small arts organization with a global reach. Our work strengthens the arts and the\narts community, and we need your support to do it!";

const DonateMain = styled.div<{ $h: number }>`
  height: ${(p) => p.$h}px;
  margin: 42.8px 0 0 61.8px;
  display: flex;
  align-items: flex-start;
`;

const Steps = styled.div`
  width: 298.8px;
  display: flex;
  flex-direction: column;
  gap: 9.8px;
`;

const raised = css`
  background: #fff;
  box-shadow: 0 1px 3.5px rgba(0, 0, 0, 0.38);
`;

const Step = styled.div`
  ${raised}
  height: 33.8px;
  border-radius: 3px;
  font-size: 9.3px;
  line-height: 34.5px;
  text-align: center;
  color: #333;
`;

const Panel = styled.div<{ $h: number }>`
  ${raised}
  height: ${(p) => p.$h}px;
  border-radius: 2px;
`;

const AmountStrip = styled.div`
  margin: 9.5px 0 0 11.4px;
  width: 277px;
  height: 28px;
  display: grid;
  grid-template-columns: 36.3px repeat(5, 37px) 1fr;
  align-items: center;
  background: #ececec;
  box-shadow: 0 1px 3px rgba(0, 0, 0, 0.4);
`;

const Amount = styled.span`
  height: 19px;
  border-right: 1px solid #bbb;
  font-size: 8.1px;
  line-height: 19px;
  text-align: center;
  color: #555;
`;

const OtherField = styled.span`
  width: 41px;
  margin-left: 7.5px;
  border-bottom: 1px solid #888;
  font-size: 7px;
  line-height: 10px;
  color: #888;
`;

const Choices = styled.div`
  margin: 6.5px 0 0 16.6px;
  display: grid;
  grid-template-columns: 142.2px 1fr;
  grid-auto-rows: 30.5px;
  align-items: center;
`;

const Choice = styled.label`
  display: flex;
  align-items: center;
  gap: 6.5px;
  font-size: 7.9px;
  color: #333;
  white-space: nowrap;
`;

const Box = styled.span`
  width: 9px;
  height: 9px;
  margin-right: 1.2px;
  border: 1px solid #444;
  flex: none;
`;

const Pills = styled.div<{ $mt: number; $gap: number; $ml: number }>`
  margin: ${(p) => p.$mt}px 0 0 ${(p) => p.$ml}px;
  display: flex;
  gap: ${(p) => p.$gap}px;
`;

const Pill = styled.button<{ $w: number; $h: number; $size: number; $dark?: boolean; $bold?: boolean; $line?: string }>`
  width: ${(p) => p.$w}px;
  height: ${(p) => p.$h}px;
  padding: 0;
  border-radius: ${(p) => p.$h / 2}px;
  border: 1.3px solid ${(p) => p.$line ?? "#4a4a4a"};
  background: ${(p) => (p.$dark ? "#4a4a4a" : "#fff")};
  color: ${(p) => (p.$dark ? "#fff" : "#111")};
  font: ${(p) => (p.$bold ? 700 : 400)} ${(p) => p.$size}px/1 "Liberation Sans", Arial, sans-serif;
  -webkit-text-stroke: 0.15px currentColor;
  white-space: nowrap;
`;

const Receipt = styled.aside<{ $mt: number; $ml: number }>`
  ${raised}
  margin: ${(p) => p.$mt}px 0 0 ${(p) => p.$ml}px;
  width: 253.3px;
  height: 118.7px;
  border-radius: 4px;
  overflow: hidden;
`;

const ReceiptHead = styled.div`
  height: 45.7px;
  padding: 2px 0 0 34.5px;
  display: grid;
  grid-template-columns: 144.5px 1fr;
  align-items: center;
  background: #d8d8d8;
  color: #000;
  font: 400 14.4px/20px Lato, sans-serif;
  -webkit-text-stroke: 0.35px #000;
  white-space: nowrap;
`;

const ReceiptTotal = styled.span`
  font: 400 17px/20px "Liberation Sans", Arial, sans-serif;
  -webkit-text-stroke: 0.2px #000;
`;

const Summary = ({ mt, ml }: { mt: number; ml: number }) => (
  <Receipt $mt={mt} $ml={ml}>
    <ReceiptHead>
      Hillyer Art Space <ReceiptTotal>$500</ReceiptTotal>
    </ReceiptHead>
    <Copy $size={9.2} $line={14} $mt={18.7} $center $ls={0.25} $color="#444">
      Thank you for your generous donation
    </Copy>
  </Receipt>
);

const SupportIntro = () => (
  <>
    <Header />
    <Breadcrumb here="Donate" />
    <Copy $size={9.9} $line={16} $medium $mt={13.5} $ml={305} $ls={0.25}>
      SUPPORT US
    </Copy>
    <Copy $size={8.65} $line={15.05} $mt={18.5} $ml={180.5} $color="#444">
      {supportCopy}
    </Copy>
  </>
);

const DonateBoard = () => (
  <Board $w={721} $h={872.2} $mt={216.5} $scale={1.14}>
    <SupportIntro />
    <DonateMain $h={425.7}>
      <Steps>
        <Panel $h={222.5}>
          <Copy $size={8.95} $line={12} $mt={27} $ml={15.7}>
            Please Choose The Donation Amount
          </Copy>
          <AmountStrip>
            {["$50", "$100", "$250", "$500", "$1000", "$2000"].map((a) => (
              <Amount key={a}>{a}</Amount>
            ))}
            <OtherField>Other</OtherField>
          </AmountStrip>
          <Copy $size={8.95} $line={12} $mt={24.8} $ml={15.7}>
            Please specify what you would like your donation to be put toward
          </Copy>
          <Choices>
            {["Traveling Exhibitions", "Cultural Exchange Programs", "Design Studio", "Hillyer Art Space"].map((c) => (
              <Choice key={c}>
                <Box />
                {c}
                <InfoIcon glyph="?" color="#aaa" />
              </Choice>
            ))}
          </Choices>
          <Pills $mt={11} $gap={15} $ml={116.5}>
            <Pill $w={76.5} $h={18.3} $size={6.8}>
              PAY BY MAIL
            </Pill>
            <Pill $w={76.5} $h={18.3} $size={6.8} $dark>
              NEXT
            </Pill>
          </Pills>
        </Panel>
        <Step>CUSTOMER DETAILS</Step>
        <Step>PAYMENT DETAILS</Step>
        <Step>REVIEW DETAILS</Step>
        <Step>SUCCESS</Step>
      </Steps>
      <Summary mt={0.5} ml={67.8} />
    </DonateMain>
    <Footer ml={16.5} rule="#bbb" />
  </Board>
);

const Rule = styled.hr<{ $mt: number }>`
  margin: ${(p) => p.$mt}px 0 0 14.3px;
  width: 268.5px;
  border: 0;
  border-top: 1px solid #c2c2c2;
`;

const ReviewBoard = () => (
  <Board $w={720.5} $h={1042.5} $mt={360.5} $ml={91}>
    <SupportIntro />
    <DonateMain $h={553.3}>
      <Steps>
        <Step>CHOOSE DONATION</Step>
        <Step>CUSTOMER DETAILS</Step>
        <Step>REVIEW DETAILS</Step>
        <Panel $h={350.5}>
          <Copy $size={10} $line={14} $medium $mt={8.5} $ml={88} $ls={0.15} $color="#111">
            Please review your details
          </Copy>
          <Copy $size={7.95} $line={12} $medium $mt={16} $ml={88} $color="#222">
            MEMBERSHIP
          </Copy>
          <Copy $size={8.6} $line={17} $mt={6.5} $ml={87} $color="#444">
            {"Donating to : Hillyer Art Space\nDonation amount : $500"}
          </Copy>
          <Copy $size={7.7} $line={16.6} $mt={2.8} $ml={87} $color="#444">
            {"You will recieve a monthly newsletter about\nupcoming events and exhibits"}
          </Copy>
          <Rule $mt={5.5} />
          <Copy $size={7.95} $line={12} $medium $mt={8.5} $ml={88} $color="#222">
            PAYMENT
          </Copy>
          <Copy $size={7.9} $line={17.05} $mt={8.8} $ml={88} $color="#444">
            {"Cardholder Name : Amanda Brandt\nCredit Card number : xxxx-xxxx-xxxx-0193\nExpiration date : 04/28/2020"}
          </Copy>
          <Rule $mt={8.5} />
          <Copy $size={7.95} $line={12} $medium $mt={13} $ml={88} $color="#222">
            CUSTOMER
          </Copy>
          <Copy $size={7.9} $line={17.05} $mt={6.5} $ml={88} $color="#444">
            {"Name : Amanda Brandt\nEmail : amandabrandt@gmail.com"}
          </Copy>
          <Pills $mt={15.2} $gap={53.5} $ml={22.5}>
            <Pill $w={98.5} $h={24} $size={6.9}>
              EDIT DETAILS
            </Pill>
            <Pill $w={98.5} $h={24} $size={6.9} $dark>
              CONFIRM PAYMENT
            </Pill>
          </Pills>
        </Panel>
        <Step>SUCCESS</Step>
      </Steps>
      <Summary mt={129.5} ml={67.8} />
    </DonateMain>
    <Footer ml={16.3} rule="#ccc" />
  </Board>
);

/* ---------- payment completed board ---------- */

const DoneHead = styled.div`
  margin: 66px 0 0 159.4px;
  height: 54px;
  display: flex;
  align-items: flex-start;
  gap: 22px;
`;

const DoneIcon = () => (
  <svg width="57" height="54" viewBox="0 0 57 54" fill="none" stroke="#333" strokeWidth="1.2">
    <circle cx="26" cy="26.5" r="25.5" />
    <path d="M14 21 26.5 33.5 56 4" />
  </svg>
);

const DoneBoard = () => (
  <Board $w={811.5} $h={662.5} $mt={338}>
    <DoneHead>
      <DoneIcon />
      <Copy $size={24} $line={28} $mt={18.5}>
        Your Payment was Completed!
      </Copy>
    </DoneHead>
    <Copy $size={19.1} $line={24} $mt={56.4} $center $color="#111">
      Hi <b>Amanda</b>!
    </Copy>
    <Copy $size={19.2} $line={24} $mt={17} $center $color="#111">
      Welcome to the President’s Circle
    </Copy>
    <Copy $size={19.8} $line={24} $mt={76} $ml={12} $center $color="#888">
      We are so glad to have you as a member of
    </Copy>
    <Copy $size={19.6} $line={24} $mt={11.5} $ml={12} $center $color="#3a3a3a">
      INTERNATIONAL ARTS &amp; ARTISTS
    </Copy>
    <Copy $size={17.5} $line={21} $mt={74} $ml={159.4}>
      {"To print your receipt, please click the button below. The receipt\ndetails will also be emailed to the address provided."}
    </Copy>
    <Pills $mt={56.5} $gap={37.5} $ml={52}>
      <Pill $w={186.5} $h={47} $size={13.8} $bold $line="#8e8e8e">
        PRINT RECIEPT
      </Pill>
      <Pill $w={223} $h={47} $size={13.8} $dark>
        GO TO YOUR ACCOUNT
      </Pill>
      <Pill $w={223} $h={47} $size={13.8} $dark>
        RETURN TO IA&amp;A
      </Pill>
    </Pills>
  </Board>
);

/* ---------- page ---------- */

const homeNotes = [
  "High visibility for membership and donate options",
  "When the user clicks on the search icon, the entire\nnavigation will be replaced by a search bar",
  "Incentives for repeat customers to sign up\nfor memberships",
  "The user can preview the event if they don’t\nwant to leave the page, but learn a little more\nabout the event",
  "A leading page to the next step a user can\ntake after accessing information on the page",
];

const showNotes = [
  "A sub navigation lets the user navigate different sections under\nthe Traveling exhibitions without having to break the user flow",
  "With a large site of 45 pages to navigate, breadcrumbs will provide\nthe user with an exit point without needing to go back to the\nhomepage and start over",
  "Current events and exhibitions with essential infomation and an\noption to preview the event",
];

export default function App() {
  return (
    <>
      <GlobalStyle />
      <Canvas>
        <Lane $w={1208.5} $pl={105}>
          <Annotated>
            <HomeBoard />
            <NoteList items={homeNotes} ml={25} mt={51.5} gap={34.2} ls={0.25} />
          </Annotated>
          <MembershipBoard />
          <DonateBoard />
        </Lane>
        <Lane $w={1396} $pl={0}>
          <Annotated $ml={72}>
            <ExhibitionsBoard />
            <NoteList items={showNotes} ml={25} mt={46.5} gap={31.7} ls={0.08} dot={29} />
          </Annotated>
          <ReviewBoard />
          <DoneBoard />
        </Lane>
      </Canvas>
    </>
  );
}
